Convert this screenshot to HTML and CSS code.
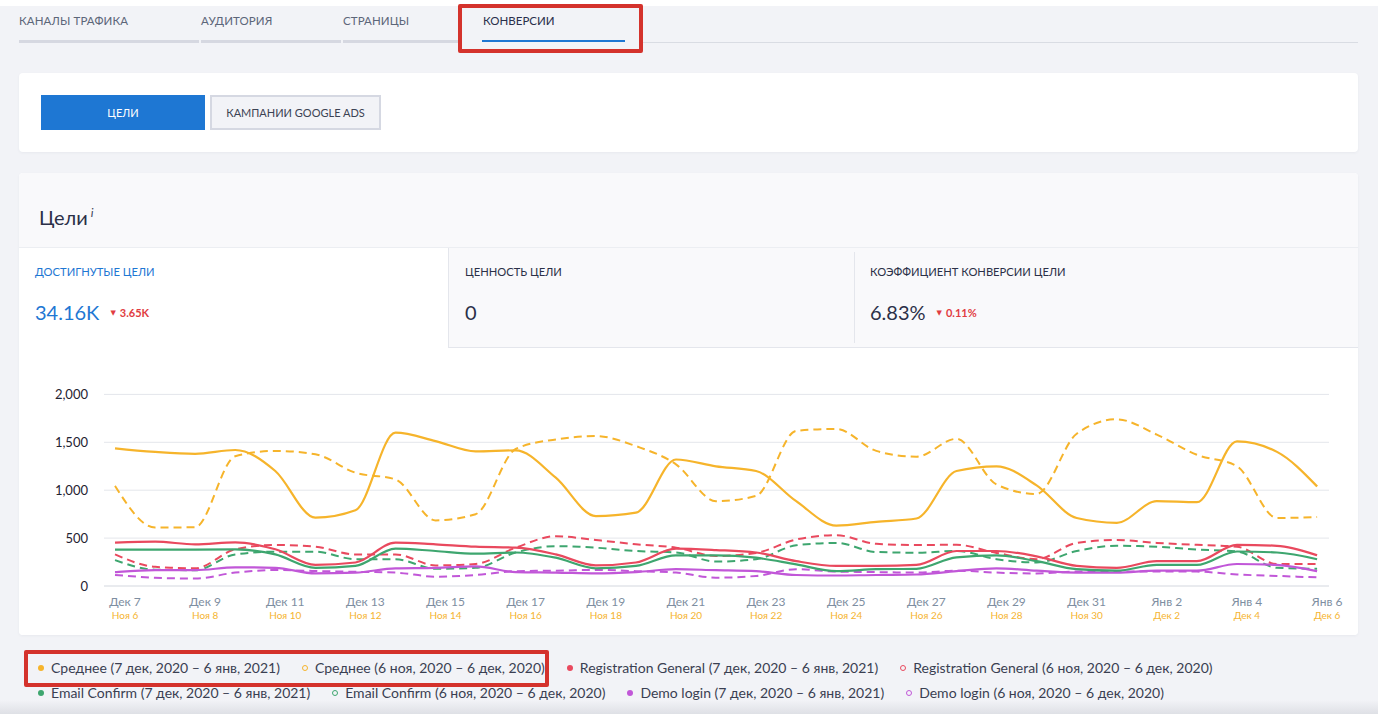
FILE: index.html
```html
<!DOCTYPE html>
<html lang="ru">
<head>
<meta charset="utf-8">
<title>Конверсии</title>
<link rel="stylesheet" href="styles.css">
</head>
<body>
<div class="page">
  <nav class="tabs">
    <a class="tab tab-1">Каналы трафика</a>
    <a class="tab tab-2">Аудитория</a>
    <a class="tab tab-3">Страницы</a>
    <a class="tab-active"><span class="tab-active-label">Конверсии</span></a>
    <span class="tabs-rest"></span>
  </nav>

  <section class="card switch-card">
    <button class="btn btn-primary">Цели</button>
    <button class="btn btn-secondary">Кампании Google Ads</button>
  </section>

  <section class="card goals-card">
    <header class="goals-head">
      <h2 class="goals-title">Цели<sup class="info">i</sup></h2>
    </header>
    <div class="metrics">
      <div class="metric metric-active">
        <div class="metric-label">Достигнутые цели</div>
        <div class="metric-value-row"><span class="metric-value">34.16K</span><span class="delta"><span class="delta-arrow">▼</span>3.65K</span></div>
      </div>
      <div class="metric metric-mid">
        <div class="metric-label">Ценность цели</div>
        <div class="metric-value-row"><span class="metric-value">0</span></div>
      </div>
      <div class="metric metric-last">
        <div class="metric-label">Коэффициент конверсии цели</div>
        <div class="metric-value-row"><span class="metric-value">6.83%</span><span class="delta"><span class="delta-arrow">▼</span>0.11%</span></div>
      </div>
    </div>
    <div class="chart-wrap">
      <svg id="chart" class="chart" width="1339" height="287" viewBox="0 0 1339 287"></svg>
    </div>
  </section>

  <div class="legend">
    <span class="lg-item"><i class="dot dot-orange"></i>Среднее (7 дек, 2020 – 6 янв, 2021)</span>
    <span class="lg-item"><i class="dot dot-orange dot-hollow"></i>Среднее (6 ноя, 2020 – 6 дек, 2020)</span>
    <span class="lg-item"><i class="dot dot-red"></i>Registration General (7 дек, 2020 – 6 янв, 2021)</span>
    <span class="lg-item"><i class="dot dot-red dot-hollow"></i>Registration General (6 ноя, 2020 – 6 дек, 2020)</span>
    <span class="lg-item"><i class="dot dot-green"></i>Email Confirm (7 дек, 2020 – 6 янв, 2021)</span>
    <span class="lg-item"><i class="dot dot-green dot-hollow"></i>Email Confirm (6 ноя, 2020 – 6 дек, 2020)</span>
    <span class="lg-item"><i class="dot dot-purple"></i>Demo login (7 дек, 2020 – 6 янв, 2021)</span>
    <span class="lg-item"><i class="dot dot-purple dot-hollow"></i>Demo login (6 ноя, 2020 – 6 дек, 2020)</span>
  </div>

  <div class="mark mark-tab"></div>
  <div class="mark mark-legend"></div>
  <div class="bottom-fade"></div>
</div>
<script src="script.js"></script>
</body>
</html>
```

FILE: styles.css
```css
* { box-sizing: border-box; }
html, body { margin: 0; padding: 0; }
body {
  background: #f2f3f7;
  font-family: Lato, "Noto Sans", "DejaVu Sans", sans-serif;
  color: #2b3048;
  width: 1378px;
  height: 714px;
  overflow: hidden;
}
.page {
  position: relative;
  height: 714px;
  padding: 0 20px 0 19px;
  border-top: 6px solid #ffffff;
}

/* tabs */
.tabs {
  display: flex;
  align-items: flex-end;
  gap: 2px;
  height: 37px;
}
.tab {
  display: block;
  font-size: 11.5px;
  line-height: 14px;
  text-transform: uppercase;
  color: #5c6679;
  padding: 1px 0 12px 0;
  border-bottom: 3px solid #d6d8e1;
  letter-spacing: 0.1px;
}
.tab-1 { width: 180px; }
.tab-2 { width: 140px; }
.tab-3 { width: 115px; margin-right: -2px; }
.tab-active {
  display: block;
  padding: 0 16px 0 24px;
  border-bottom: 1px solid transparent;
}
.tab-active-label {
  display: block;
  width: 143px;
  font-size: 11.5px;
  line-height: 14px;
  text-transform: uppercase;
  color: #2a2f4b;
  padding: 1px 0 12px 1px;
  border-bottom: 2px solid #1e77d3;
}
.tabs-rest {
  flex: 1;
  margin-left: -2px;
  border-bottom: 1px solid #d9dce3;
  height: 1px;
}

/* cards */
.card {
  background: #ffffff;
  border-radius: 4px;
  box-shadow: 0 1px 3px rgba(40, 50, 80, 0.05);
}
.switch-card {
  margin-top: 30px;
  height: 79px;
  padding: 22px 22px;
  display: flex;
  gap: 5px;
}
.btn {
  height: 35px;
  font-family: Lato, "Noto Sans", sans-serif;
  font-size: 11px;
  text-transform: uppercase;
  border: 0;
  border-radius: 0;
  padding: 0;
  cursor: pointer;
}
.btn-primary {
  width: 164px;
  background: #1e77d3;
  color: #ffffff;
}
.btn-secondary {
  width: 171px;
  background: #f2f3f7;
  color: #3c4354;
  border: 2px solid #d5d8e2;
}

.goals-card {
  margin-top: 21px;
  overflow: hidden;
  background: #ffffff;
}
.goals-head {
  height: 75px;
  background: #f9f9fb;
  border-bottom: 1px solid #eceef2;
  display: flex;
  align-items: center;
  padding: 0 20px;
}
.goals-title {
  margin: 0;
  padding-top: 14px;
  font-size: 20px;
  font-weight: 400;
  color: #2b3048;
}
.info {
  font-size: 12px;
  font-style: italic;
  color: #3d4358;
  margin-left: 3px;
  vertical-align: 8px;
}

.metrics {
  display: grid;
  grid-template-columns: 429px 406px 1fr;
  height: 100px;
}
.metric {
  padding: 17px 16px 0 16px;
}
.metric-active { background: #ffffff; }
.metric-mid, .metric-last {
  background: #f9f9fb;
  border-bottom: 1px solid #e4e6ec;
}
.metric-mid { border-left: 1px solid #e4e6ec; }
.metric-last { position: relative; }
.metric-last::before {
  content: "";
  position: absolute;
  left: 0;
  top: 4px;
  bottom: 4px;
  border-left: 1px solid #e4e6ec;
}
.metric-label {
  font-size: 11.2px;
  line-height: 14px;
  text-transform: uppercase;
  color: #2b3048;
}
.metric-active .metric-label { color: #1e77d3; }
.metric-value-row {
  margin-top: 21px;
  display: flex;
  align-items: center;
  gap: 11px;
}
.metric-value {
  font-size: 20px;
  line-height: 24px;
  color: #2b3048;
}
.metric-active .metric-value { color: #1e77d3; }
.delta {
  font-size: 11px;
  font-weight: 700;
  color: #e13c41;
  display: flex;
  align-items: center;
}
.delta-arrow {
  font-size: 7px;
  margin-right: 4px;
}

.chart-wrap {
  height: 287px;
  background: #ffffff;
}
.chart { display: block; }
.grid { stroke: #e4e6eb; stroke-width: 1; }
.grid-base { stroke: #d3d7de; stroke-width: 1; }
.ylabel {
  font-family: Lato, "Noto Sans", sans-serif;
  font-size: 13px;
  fill: #1f2331;
}
.xlabel {
  font-family: Lato, "Noto Sans", sans-serif;
  font-size: 12px;
  fill: #7e8ea1;
}
.xsub {
  font-family: Lato, "Noto Sans", sans-serif;
  font-size: 10px;
  fill: #f5b430;
}
.line { fill: none; stroke-width: 2.2; stroke-linejoin: round; }
.line-dash { stroke-width: 2; stroke-dasharray: 8 5; }
.c-orange { stroke: #f6b42b; }
.c-red { stroke: #e9495e; }
.c-green { stroke: #3ea66f; }
.c-purple { stroke: #c157d8; }

/* legend */
.legend {
  display: flex;
  flex-wrap: wrap;
  column-gap: 22px;
  padding: 20px 0 0 19px;
  font-size: 14px;
  line-height: 25px;
  color: #3a3f52;
}
.lg-item {
  display: flex;
  align-items: center;
  white-space: nowrap;
}
.dot {
  display: inline-block;
  width: 6px;
  height: 6px;
  border-radius: 50%;
  margin-right: 7px;
}
.dot-orange { background: #f6b42b; border-color: #f6b42b; }
.dot-red { background: #e9495e; border-color: #e9495e; }
.dot-green { background: #3ea66f; border-color: #3ea66f; }
.dot-purple { background: #c157d8; border-color: #c157d8; }
.dot-hollow {
  background: transparent;
  border-width: 1.5px;
  border-style: solid;
}

/* annotation boxes */
.mark {
  position: absolute;
  border: 4px solid #d4322c;
  border-radius: 2px;
  pointer-events: none;
}
.mark-tab { left: 458px; top: -2px; width: 185px; height: 49px; }
.mark-legend { left: 24px; top: 644px; width: 525px; height: 37px; }

.bottom-fade {
  position: absolute;
  left: 0;
  right: 0;
  bottom: 0;
  height: 14px;
  background: linear-gradient(to bottom, rgba(220, 222, 228, 0), rgba(214, 216, 222, 0.7));
  pointer-events: none;
}
```

FILE: script.js
```js
(function () {
  var NS = 'http://www.w3.org/2000/svg';
  var svg = document.getElementById('chart');
  var X0 = 96, DX = 40.07, Y0 = 238, K = 0.0958;
  var GX1 = 85, GX2 = 1310;

  function el(name, attrs, text) {
    var e = document.createElementNS(NS, name);
    for (var k in attrs) e.setAttribute(k, attrs[k]);
    if (text !== undefined) e.textContent = text;
    svg.appendChild(e);
    return e;
  }
  function yOf(v) { return Y0 - v * K; }

  [2000, 1500, 1000, 500, 0].forEach(function (v) {
    var y = yOf(v);
    el('line', { x1: GX1, x2: GX2, y1: y, y2: y, 'class': v === 0 ? 'grid-base' : 'grid' });
    el('text', { x: 69, y: y + 4.5, 'text-anchor': 'end', 'class': 'ylabel' }, v === 0 ? '0' : v.toLocaleString('en-US'));
  });

  var main = ['Дек 7','Дек 9','Дек 11','Дек 13','Дек 15','Дек 17','Дек 19','Дек 21','Дек 23','Дек 25','Дек 27','Дек 29','Дек 31','Янв 2','Янв 4','Янв 6'];
  var sub = ['Ноя 6','Ноя 8','Ноя 10','Ноя 12','Ноя 14','Ноя 16','Ноя 18','Ноя 20','Ноя 22','Ноя 24','Ноя 26','Ноя 28','Ноя 30','Дек 2','Дек 4','Дек 6'];
  for (var j = 0; j < main.length; j++) {
    var cx = X0 + DX * j * 2 + 10;
    el('text', { x: cx, y: 258, 'text-anchor': 'middle', 'class': 'xlabel' }, main[j]);
    el('text', { x: cx, y: 271, 'text-anchor': 'middle', 'class': 'xsub' }, sub[j]);
  }

  var series = [
    { c: 'c-purple', d: true, v: [115,87,77,140,167,157,148,140,97,115,155,160,168,155,140,87,105,175,150,145,140,160,140,130,150,150,150,150,120,105,90] },
    { c: 'c-green', d: true, v: [270,170,165,330,358,358,280,280,180,190,350,415,400,365,350,255,280,425,450,355,348,365,280,245,365,420,410,380,360,190,180] },
    { c: 'c-red', d: true, v: [330,200,185,383,428,410,330,330,215,230,400,520,480,435,400,313,345,485,530,440,428,430,345,280,450,480,450,430,410,230,230] },
    { c: 'c-orange', d: true, v: [1045,610,614,1355,1410,1375,1183,1113,685,750,1430,1530,1565,1460,1270,885,940,1620,1640,1410,1350,1537,1060,960,1590,1740,1580,1370,1250,710,720] },
    { c: 'c-purple', d: false, v: [145,165,165,195,190,132,140,185,190,205,145,140,132,145,175,165,155,115,110,115,120,155,185,160,140,140,160,160,230,220,155] },
    { c: 'c-green', d: false, v: [380,379,380,383,330,190,210,390,365,337,350,295,185,210,320,320,295,225,155,175,180,300,320,260,175,160,220,220,360,350,280] },
    { c: 'c-red', d: false, v: [452,462,435,455,383,220,245,452,435,410,400,330,215,245,390,375,350,260,210,210,220,365,365,310,210,190,260,260,430,420,320] },
    { c: 'c-orange', d: false, v: [1437,1400,1380,1420,1200,713,790,1600,1513,1405,1415,1130,730,765,1320,1250,1200,885,630,670,705,1200,1250,1050,710,660,885,875,1510,1400,1040] }
  ];

  function sgn(x) { return x < 0 ? -1 : 1; }
  function mono(p) {
    var n = p.length, i, d = [], t = new Array(n);
    for (i = 0; i < n - 1; i++) d.push((p[i + 1][1] - p[i][1]) / (p[i + 1][0] - p[i][0]));
    for (i = 1; i < n - 1; i++) {
      var h0 = p[i][0] - p[i - 1][0], h1 = p[i + 1][0] - p[i][0];
      var s0 = d[i - 1], s1 = d[i];
      var q = (s0 * h1 + s1 * h0) / (h0 + h1);
      t[i] = (sgn(s0) + sgn(s1)) * Math.min(Math.abs(s0), Math.abs(s1), 0.5 * Math.abs(q)) || 0;
    }
    t[0] = (3 * d[0] - t[1]) / 2;
    t[n - 1] = (3 * d[n - 2] - t[n - 2]) / 2;
    var s = 'M' + p[0][0].toFixed(1) + ',' + p[0][1].toFixed(1);
    for (i = 0; i < n - 1; i++) {
      var h = (p[i + 1][0] - p[i][0]) / 3;
      s += 'C' + (p[i][0] + h).toFixed(1) + ',' + (p[i][1] + h * t[i]).toFixed(1) + ' ' +
        (p[i + 1][0] - h).toFixed(1) + ',' + (p[i + 1][1] - h * t[i + 1]).toFixed(1) + ' ' +
        p[i + 1][0].toFixed(1) + ',' + p[i + 1][1].toFixed(1);
    }
    return s;
  }

  series.forEach(function (s) {
    var pts = s.v.map(function (v, i) { return [X0 + DX * i, yOf(v)]; });
    el('path', { d: mono(pts), 'class': 'line ' + s.c + (s.d ? ' line-dash' : '') });
  });
})();
```
